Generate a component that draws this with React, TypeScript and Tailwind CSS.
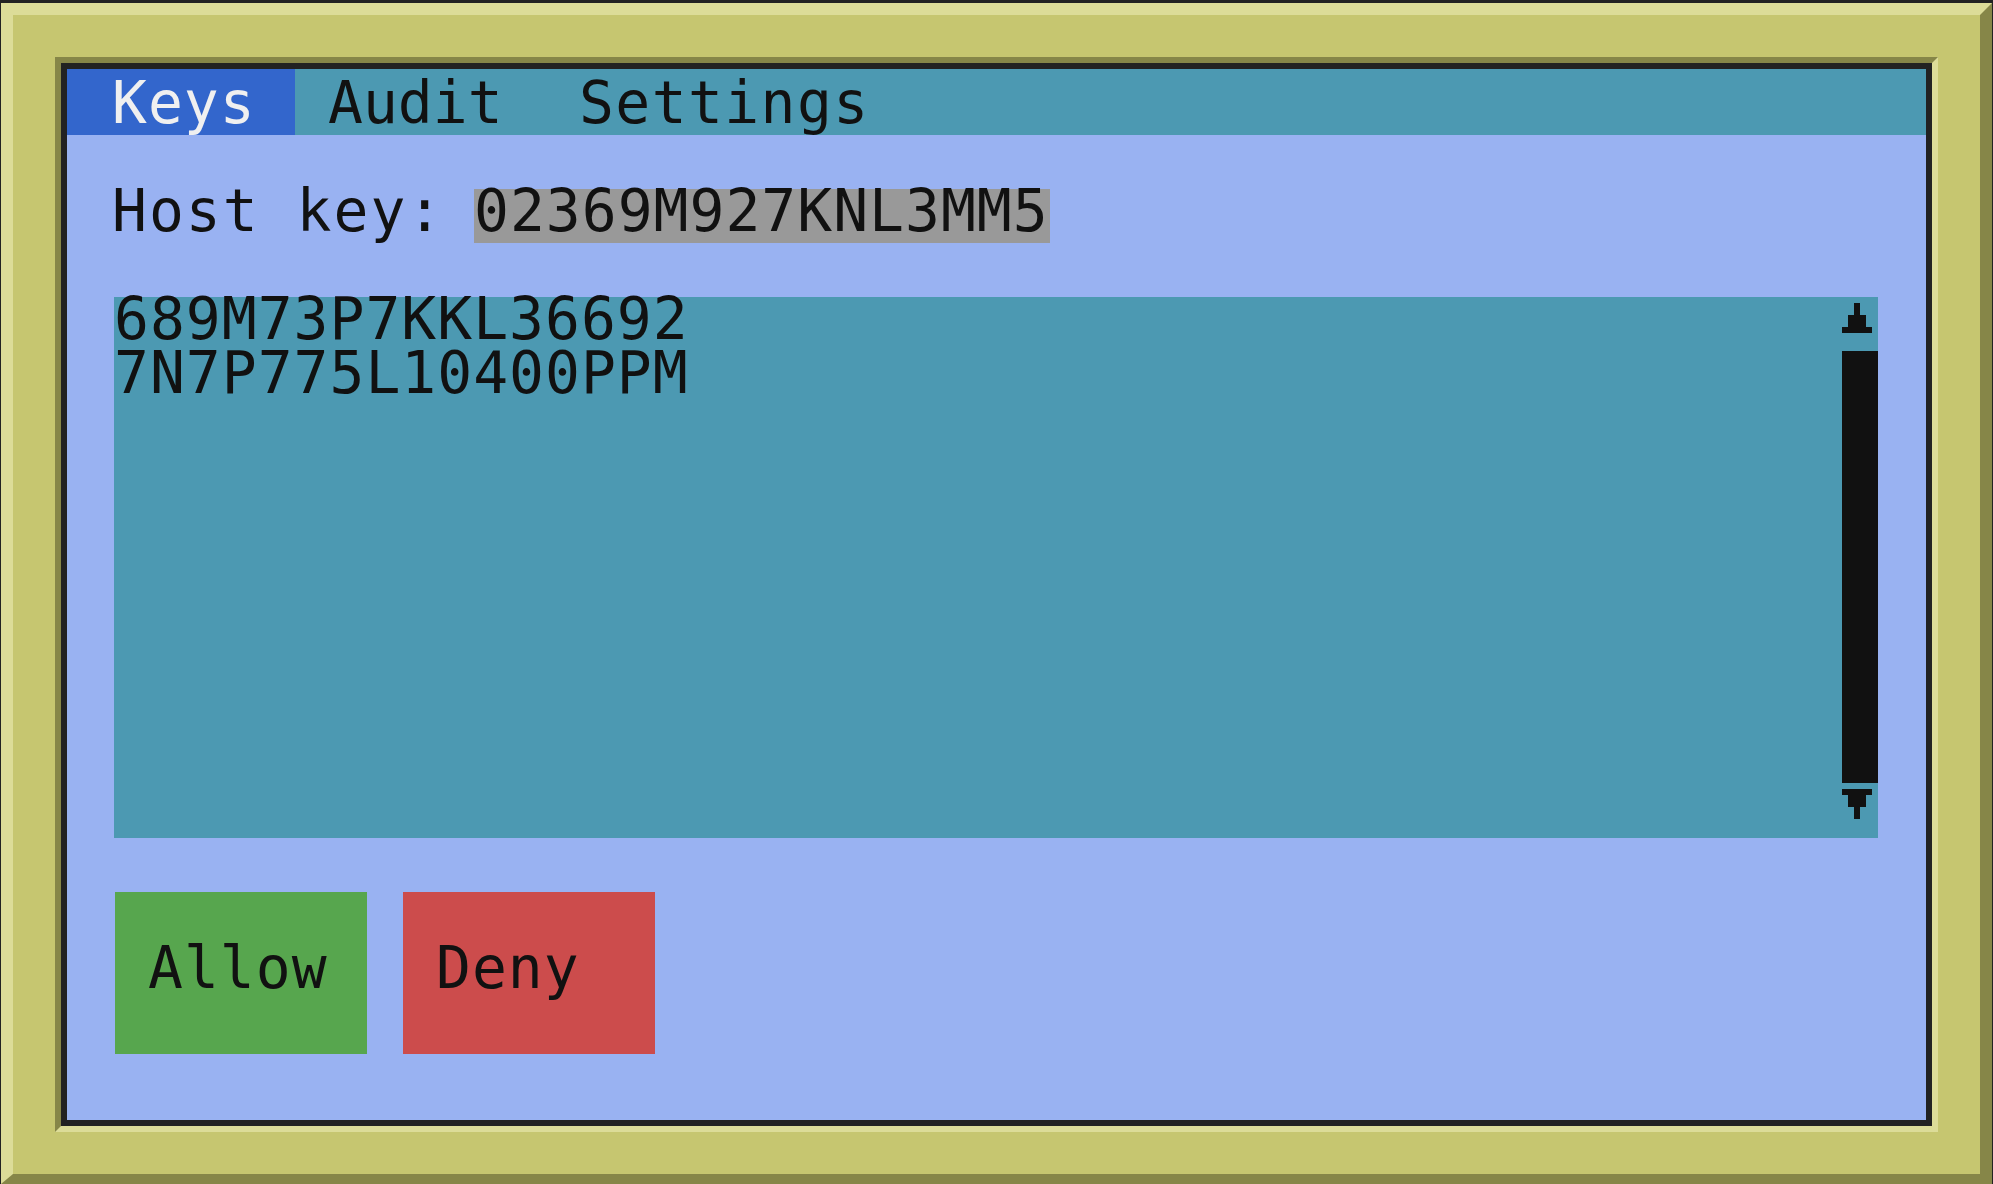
// Terminal-style key approval window: olive bezel, tab strip, host key and
// pending key list with a scrollbar, then Allow / Deny.
const mono = "font-['DejaVu_Sans_Mono','Liberation_Mono',monospace] text-[58px]";

const lines = ["689M73P7KKL36692", "7N7P775L10400PPM"];

function UpArrow() {
  return (
    <svg width="36" height="54" viewBox="0 0 36 54" className="block shrink-0">
      <rect x="12" y="6" width="6" height="12" fill="#111111" />
      <rect x="6" y="18" width="18" height="12" fill="#111111" />
      <rect x="0" y="30" width="30" height="6" fill="#111111" />
    </svg>
  );
}

function DownArrow() {
  return (
    <svg width="36" height="54" viewBox="0 0 36 54" className="block shrink-0">
      <rect x="0" y="6" width="30" height="6" fill="#111111" />
      <rect x="6" y="12" width="18" height="12" fill="#111111" />
      <rect x="12" y="24" width="6" height="12" fill="#111111" />
    </svg>
  );
}

export default function App() {
  return (
    <div className="w-[1993px] h-[1184px] bg-[#222222] pt-[3px] pl-[1px] pr-[1px]">
      <div className="h-full border-t-[12px] border-l-[12px] border-r-[12px] border-b-[10px] border-t-[#dcdc98] border-l-[#dcdc98] border-r-[#868648] border-b-[#868648] bg-[#c6c670] p-[42px]">
        <div className="h-full border-[6px] border-t-[#868648] border-l-[#868648] border-r-[#dcdc98] border-b-[#dcdc98]">
          <div className={`h-full border-[6px] border-[#222222] bg-[#99b2f2] flex flex-col text-[#111111] ${mono}`}>
            {/* tabs */}
            <div className="h-[66px] shrink-0 bg-[#4c99b2] flex">
              <div className="w-[228px] bg-[#3366cc] pl-[45px] pt-[12px] text-[#f0f0f0] leading-[44px] tracking-[1px]">
                Keys
              </div>
              <div className="w-[284px] pl-[33px] pt-[12px] leading-[44px]">Audit</div>
              <div className="pt-[12px] leading-[44px] tracking-[1.4px]">Settings</div>
            </div>

            {/* host key */}
            <div className="mt-[54px] pl-[45px] flex h-[54px] shrink-0">
              <div className="w-[362px] h-[54px] leading-[44px] tracking-[2px] whitespace-pre">Host key:</div>
              <div className="w-[576px] h-[54px] bg-[#999999] leading-[44px] tracking-[1px]">02369M927KNL3MM5</div>
            </div>

            {/* pending keys */}
            <div className="mt-[54px] ml-[47px] mr-[48px] h-[541px] shrink-0 bg-[#4c99b2] flex">
              <div className="flex-1">
                {lines.map((l) => (
                  <div key={l} className="h-[54px] leading-[44px] tracking-[1px]">
                    {l}
                  </div>
                ))}
              </div>
              <div className="w-[36px] flex flex-col">
                <UpArrow />
                <div className="h-[432px] bg-[#111111]" />
                <DownArrow />
              </div>
            </div>

            {/* actions */}
            <div className="mt-[54px] ml-[48px] flex gap-[36px]">
              <div className="w-[252px] h-[162px] bg-[#57a64e] flex items-center pl-[33px]">
                <div className="h-[54px] leading-[44px] tracking-[1px]">Allow</div>
              </div>
              <div className="w-[252px] h-[162px] bg-[#cc4c4c] flex items-center pl-[33px]">
                <div className="h-[54px] leading-[44px] tracking-[1px]">Deny</div>
              </div>
            </div>
          </div>
        </div>
      </div>
    </div>
  );
}
